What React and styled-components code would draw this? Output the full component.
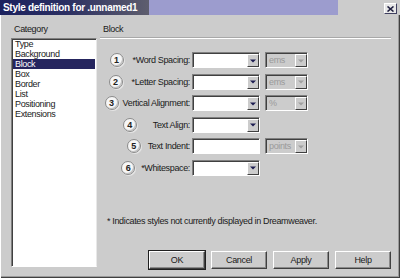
import React from 'react';
import styled, { createGlobalStyle } from 'styled-components';

const GlobalStyle = createGlobalStyle`
  html, body {
    margin: 0;
    padding: 0;
    background: #cccccc;
  }
  body {
    font-family: "Liberation Sans", Arial, sans-serif;
    font-size: 9px;
    letter-spacing: -0.35px;
    color: #1a1a1a;
  }
`;

const Window = styled.div`
  width: 400px;
  height: 278px;
  display: flex;
  flex-direction: column;
  background: #cccccc;
`;

const TitleBar = styled.div`
  height: 15px;
  display: flex;
  align-items: stretch;
  flex: none;
`;

const TitleText = styled.div`
  width: 149px;
  padding-left: 3px;
  box-sizing: border-box;
  background: linear-gradient(90deg, #1b215e 0%, #2b2f62 45%, #5e5e6e 100%);
  color: #ffffff;
  font-weight: bold;
  font-size: 10px;
  letter-spacing: -0.3px;
  line-height: 15px;
  white-space: nowrap;
`;

const TitleFill = styled.div`
  width: 189px;
  background: #9c9cce;
`;

const TitleRest = styled.div`
  flex: 1;
  display: flex;
  justify-content: flex-end;
  align-items: flex-start;
  padding: 3px 3px 0 0;
`;

const CloseButton = styled.div`
  width: 13px;
  height: 11px;
  box-sizing: border-box;
  background: #e8e8e8;
  border-top: 1px solid #ffffff;
  border-left: 1px solid #ffffff;
  border-right: 1px solid #404060;
  border-bottom: 1px solid #404060;
  display: flex;
  align-items: center;
  justify-content: center;
`;

const Frame = styled.div`
  flex: 1;
  display: grid;
  grid-template-columns: 86px 1fr;
  column-gap: 3px;
  padding: 8px 8px 0 11px;
  box-shadow: inset 1px 0 0 #ffffff, inset -1px -1px 0 #404040, inset -2px -2px 0 #9a9a9a;
`;

const Sidebar = styled.div`
  display: flex;
  flex-direction: column;
`;

const SectionLabel = styled.div`
  height: 15px;
  line-height: 13px;
  padding-left: ${p => p.$indent || 3}px;
`;

const ListBox = styled.div`
  height: 229px;
  box-sizing: border-box;
  background: #ffffff;
  border-top: 1px solid #808080;
  border-left: 1px solid #808080;
  border-right: 1px solid #e8e8e8;
  border-bottom: 1px solid #ffffff;
  box-shadow: inset 1px 1px 0 #404040;
  padding: 0 1px 0 1px;
`;

const ListItem = styled.div`
  height: 10px;
  line-height: 10px;
  padding-left: 2px;
  background: ${p => (p.$selected ? '#25255e' : 'transparent')};
  color: ${p => (p.$selected ? '#ffffff' : '#1a1a1a')};
`;

const Main = styled.div`
  display: flex;
  flex-direction: column;
`;

const Rule = styled.div`
  height: 1px;
  background: #ffffff;
  box-shadow: 0 -1px 0 #a8a8a8;
  margin-right: 1px;
`;

const Rows = styled.div`
  display: grid;
  grid-template-columns: 90px 68px 46px;
  grid-auto-rows: 16px;
  column-gap: 2px;
  row-gap: 5.5px;
  margin-top: 13px;
  align-items: center;
`;

const LabelCell = styled.div`
  display: flex;
  align-items: center;
  justify-content: flex-end;
  gap: 3px;
  white-space: nowrap;
`;

const Badge = styled.span`
  width: 14px;
  height: 14px;
  box-sizing: border-box;
  border-radius: 50%;
  border: 1px solid #8a8a8a;
  background: #f6f6f6;
  box-shadow: inset -1px -1px 0 #c4c4c4, 1px 1px 0 #e4e4e4;
  display: flex;
  align-items: center;
  justify-content: center;
  font-weight: bold;
  font-size: 9px;
  letter-spacing: 0;
  color: #222;
  margin-right: ${p => p.$space || 0}px;
`;

const Field = styled.div`
  height: 16px;
  box-sizing: border-box;
  display: flex;
  align-items: stretch;
  background: ${p => (p.$disabled ? '#cccccc' : '#ffffff')};
  border-top: 1px solid #808080;
  border-left: 1px solid #808080;
  border-right: 1px solid #ffffff;
  border-bottom: 1px solid #ffffff;
  box-shadow: inset 1px 1px 0 #404040;
  margin-left: ${p => (p.$unit ? 3 : 0)}px;
`;

const FieldText = styled.span`
  flex: 1;
  padding: 1px 0 0 3px;
  line-height: 12px;
  color: #9a9a9a;
`;

const Arrow = styled.span`
  width: 12px;
  margin: 1px 0 0 0;
  box-sizing: border-box;
  background: #cccccc;
  border-top: 1px solid #ffffff;
  border-left: 1px solid #ffffff;
  border-right: 1px solid #404040;
  border-bottom: 1px solid #404040;
  display: flex;
  align-items: center;
  justify-content: center;
`;

const Footnote = styled.div`
  margin-top: 39px;
  padding-left: 7px;
  height: 12px;
  line-height: 12px;
`;

const Buttons = styled.div`
  margin-top: 24px;
  display: flex;
  justify-content: flex-end;
  gap: 6px;
  padding-right: 1px;
`;

const Button = styled.div`
  width: 56px;
  height: 18px;
  box-sizing: border-box;
  border-top: 1px solid #ffffff;
  border-left: 1px solid #ffffff;
  border-right: 1px solid #404040;
  border-bottom: 1px solid #404040;
  box-shadow: inset -1px -1px 0 #8a8a8a;
  display: flex;
  align-items: center;
  justify-content: center;
  ${p => p.$default && 'outline: 1px solid #202020;'}
`;

const DownArrow = ({ disabled }) => (
  <svg width="6" height="4" viewBox="0 0 6 4">
    <path d="M0 0.5 H6 L3 3.5 Z" fill={disabled ? '#a0a0a0' : '#1c1c50'} />
  </svg>
);

const Select = ({ value, disabled, unit, plain }) => (
  <Field $disabled={disabled} $unit={unit}>
    <FieldText>{value}</FieldText>
    {!plain && (
      <Arrow>
        <DownArrow disabled={disabled} />
      </Arrow>
    )}
  </Field>
);

const categories = ['Type', 'Background', 'Block', 'Box', 'Border', 'List', 'Positioning', 'Extensions'];

const rows = [
  { n: 1, label: '*Word Spacing:', unit: 'ems', space: 6 },
  { n: 2, label: '*Letter Spacing:', unit: 'ems', space: 6 },
  { n: 3, label: 'Vertical Alignment:', unit: '%', space: 1 },
  { n: 4, label: 'Text Align:', space: 13 },
  { n: 5, label: 'Text Indent:', unit: 'points', plain: true, space: 4 },
  { n: 6, label: '*Whitespace:', space: 3 },
];

export default function App() {
  return (
    <>
      <GlobalStyle />
      <Window>
        <TitleBar>
          <TitleText>Style definition for .unnamed1</TitleText>
          <TitleFill />
          <TitleRest>
            <CloseButton>
              <svg width="7" height="6" viewBox="0 0 7 6">
                <path d="M0.5 0.5 L6.5 5.5 M6.5 0.5 L0.5 5.5" stroke="#202040" strokeWidth="1.6" />
              </svg>
            </CloseButton>
          </TitleRest>
        </TitleBar>
        <Frame>
          <Sidebar>
            <SectionLabel>Category</SectionLabel>
            <ListBox>
              {categories.map(c => (
                <ListItem key={c} $selected={c === 'Block'}>{c}</ListItem>
              ))}
            </ListBox>
          </Sidebar>
          <Main>
            <SectionLabel $indent={3}>Block</SectionLabel>
            <Rule />
            <Rows>
              {rows.map(r => (
                <React.Fragment key={r.n}>
                  <LabelCell>
                    <Badge $space={r.space}>{r.n}</Badge>
                    <span>{r.label}</span>
                  </LabelCell>
                  <Select plain={r.plain} />
                  {r.unit ? <Select value={r.unit} disabled unit /> : <span />}
                </React.Fragment>
              ))}
            </Rows>
            <Footnote>* Indicates styles not currently displayed in Dreamweaver.</Footnote>
            <Buttons>
              <Button $default>OK</Button>
              <Button>Cancel</Button>
              <Button>Apply</Button>
              <Button>Help</Button>
            </Buttons>
          </Main>
        </Frame>
      </Window>
    </>
  );
}
